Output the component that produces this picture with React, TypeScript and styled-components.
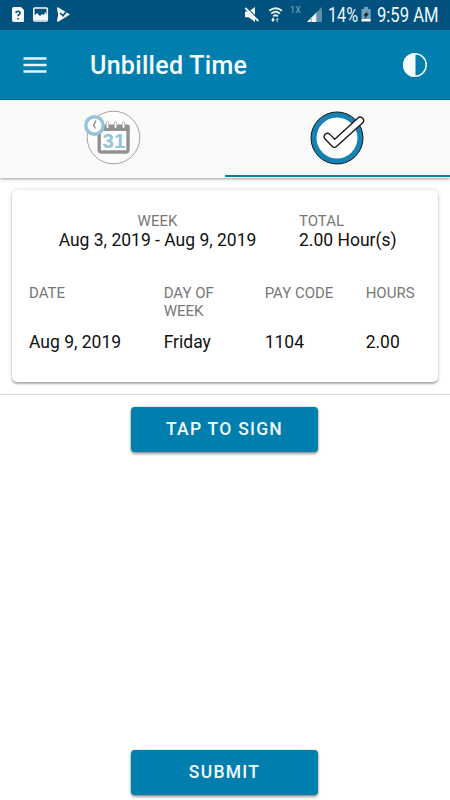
import React from "react";
import styled, { createGlobalStyle } from "styled-components";

const BLUE = "#007faf";

const GlobalStyle = createGlobalStyle`
  * { box-sizing: border-box; }
  body { margin: 0; background: #fff; font-family: Roboto, "Liberation Sans", sans-serif; color: #111; }
`;

const Screen = styled.div`
  width: 450px;
  height: 800px;
  display: flex;
  flex-direction: column;
  overflow: hidden;
  background: #fff;
`;

const StatusBar = styled.div`
  height: 30px;
  flex: none;
  display: flex;
  justify-content: space-between;
  background: #00517e;
  color: #f3f9fc;
`;

const Icon = styled.svg`
  display: block;
  flex: none;
`;

const StatusGroup = styled.div`
  display: flex;
`;

const StatusText = styled.span<{ $width: number; $scale: number }>`
  width: ${(p) => p.$width}px;
  font-size: 20px;
  line-height: 31px;
  white-space: nowrap;
  transform: scaleX(${(p) => p.$scale});
  transform-origin: left;
`;

const NetworkText = styled.span`
  width: 16px;
  padding-left: 1px;
  font-size: 9px;
  line-height: 21px;
  letter-spacing: 0.2px;
  color: #84adc4;
`;

const Header = styled.header`
  height: 70px;
  flex: none;
  display: flex;
  align-items: center;
  padding: 0 23px 0 23px;
  background: ${BLUE};
  border-bottom: 1px solid #0076a6;
`;

const Title = styled.h1`
  flex: 1;
  margin: 2px 0 0 43px;
  font-size: 25px;
  line-height: 30px;
  font-weight: 500;
  letter-spacing: 0.3px;
  color: #f7fcff;
`;

const Tabs = styled.nav`
  height: 78px;
  flex: none;
  display: grid;
  grid-template-columns: 1fr 1fr;
  background: #fafafa;
  box-shadow: 0 1px 3px rgba(0, 0, 0, 0.4);
`;

const Tab = styled.div<{ $active?: boolean }>`
  height: 77px;
  display: flex;
  justify-content: center;
  padding-right: 1px;
  border-bottom: 2px solid ${(p) => (p.$active ? BLUE : "transparent")};
`;

const Card = styled.section`
  margin: 12px 12px 0;
  height: 192px;
  flex: none;
  padding: 22px 10px 0 12px;
  border-radius: 5px;
  background: #fff;
  box-shadow: 0 2px 2px rgba(0, 0, 0, 0.28), 0 0 4px rgba(0, 0, 0, 0.16);
`;

const Summary = styled.div`
  display: grid;
  grid-template-columns: 269px 1fr;
  height: 72px;
`;

const SummaryItem = styled.div<{ $center?: boolean }>`
  padding: ${(p) => (p.$center ? "0 7px 0 5px" : "0 0 0 6px")};
  text-align: ${(p) => (p.$center ? "center" : "left")};
`;

const Row = styled.div<{ $height: number }>`
  display: grid;
  grid-template-columns: 4fr 3fr 3fr 2fr;
  height: ${(p) => p.$height}px;
`;

const Label = styled.div`
  font-size: 15px;
  line-height: 18px;
  color: #777;
  white-space: nowrap;
`;

const Value = styled.div`
  font-size: 17.5px;
  line-height: 20px;
  color: #111;
  white-space: nowrap;
`;

const Cell = styled.div`
  padding-left: 5px;
`;

const Actions = styled.main`
  margin-top: 12px;
  padding: 12px 1px 5px 0;
  flex: 1;
  display: flex;
  flex-direction: column;
  align-items: center;
  justify-content: space-between;
  border-top: 1px solid #d4d4d4;
`;

const Button = styled.button`
  width: 187px;
  height: 45px;
  padding: 0 0 1px;
  border: 0;
  border-radius: 4px;
  background: ${BLUE};
  color: #f3fbff;
  font: 500 17.5px/20px Roboto, "Liberation Sans", sans-serif;
  letter-spacing: 1.25px;
  box-shadow: 0 2px 3px rgba(0, 0, 0, 0.38), 0 0 2px rgba(0, 0, 0, 0.3);
`;

const NotificationIcons = () => (
  <Icon width="80" height="30">
    <path d="M14 7h7l3 3v11q0 1-1 1h-9q-2 0-2-2V9q0-2 2-2z" fill="#f7fbff" />
    <path d="M16 13.1q0-1.9 2-1.9t2 1.7q0 1-1 1.7t-1 1.7M18 18v1.6" fill="none" stroke="#00517e" strokeWidth="1.6" />
    <rect x="33.8" y="8" width="13.5" height="13" rx="1" fill="none" stroke="#f7fbff" strokeWidth="1.6" />
    <path d="M34 20v-4l3-3 3 3 2-2 2 1 1-3 2 3v5z" fill="#f7fbff" />
    <path d="M57 8.2q0-1.5 1.4-.8L70 14.6 58.5 21.6q-1.5.8-1.5-.8l1.2-6z" fill="#f7fbff" />
    <path d="M60.2 13l2.8 2.8 4.7-6" fill="none" stroke="#00517e" strokeWidth="1.7" />
  </Icon>
);

const MuteWifiIcons = () => (
  <Icon width="45" height="30">
    <path d="M1 11.5h3.6L11 7v15l-6.4-4.8H1z" fill="#f7fbff" />
    <path d="M2.2 7.2l13 13" stroke="#00517e" strokeWidth="1.5" />
    <path d="M1.3 8l13 13" stroke="#f7fbff" strokeWidth="1.8" />
    <g fill="none" stroke="#e7f2f8" strokeWidth="1.8">
      <path d="M25.2 10.8q6.4-5 12.8 0" />
      <path d="M27.2 13.6q4.4-3.6 8.8 0" />
      <path d="M29.3 16.2q2.3-1.8 4.6 0" />
    </g>
    <path d="M28.2 17.8h1.5v1.7h1.3L29 22l-2-2.5h1.2z" fill="#f7fbff" />
    <path d="M32.5 22v-2h-1.2l2-2.5 2 2.5H34v2z" fill="#8aafc5" />
  </Icon>
);

const SignalIcon = () => (
  <Icon width="23" height="30">
    <path d="M17 7v15H2z" fill="#608fac" />
    <path d="M2 22l3.7-3.7V22zM6.5 22v-4.5L11 13v9z" fill="#f7fbff" />
    <path d="M6 17v5M11.4 12.5V22" stroke="#a4c0d0" strokeWidth=".7" />
  </Icon>
);

const BatteryIcon = () => (
  <Icon width="18" height="30">
    <path d="M2.5 9H5V7h4v2h2.7v10H2.5z" fill="#729eb8" />
    <path d="M2.5 19h9.2v2.5H2.5z" fill="#f7fbff" />
    <path d="M8.7 10.7l-4.3 4.7h2.2l-1.2 4.1 4.5-6H7.4z" fill="#10191d" />
  </Icon>
);

const MenuIcon = () => (
  <Icon width="24" height="18">
    <path d="M.5 2.5h23M.5 9h23M.5 15.5h23" stroke="#e7f3fa" strokeWidth="2.5" />
  </Icon>
);

const ContrastIcon = () => (
  <Icon width="26" height="26">
    <circle cx="14" cy="13" r="11.2" fill="none" stroke="#f5fbff" strokeWidth="1.5" />
    <path d="M14.5 1v24H14a12 12 0 0 1 0-24z" fill="#f7fcff" />
  </Icon>
);

const CalendarIcon = () => (
  <Icon width="60" height="75">
    <circle cx="31.5" cy="37.5" r="26.3" fill="#fcfcfc" stroke="#8b8b8b" strokeWidth=".8" />
    <rect x="17.2" y="26.2" width="28.8" height="25.8" rx="2" fill="#fff" stroke="#919191" strokeWidth="3.4" />
    <path d="M15.5 25h32v6h-32z" fill="#919191" />
    <path d="M25.5 23v4M33.5 23v4M41.5 23v4" stroke="#999" strokeWidth="3.2" strokeLinecap="round" />
    <path d="M25.5 23v4M33.5 23v4M41.5 23v4" stroke="#fafafa" strokeWidth="2" strokeLinecap="round" />
    <text x="32" y="48" textAnchor="middle" fontFamily="Liberation Sans, sans-serif" fontSize="20.5" fontWeight="700" fill="#94c3da">31</text>
    <circle cx="12.5" cy="25.5" r="8.7" fill="#fff" stroke="#94c3da" strokeWidth="3.5" />
    <path d="M14 20.5l-2.4 5 2 3" fill="none" stroke="#777" strokeWidth="1.1" />
  </Icon>
);

const CheckIcon = () => (
  <Icon width="60" height="75">
    <circle cx="30" cy="38" r="26" fill="#1682b4" stroke="#171717" strokeWidth="1" />
    <circle cx="30" cy="38" r="20.5" fill="#fff" />
    <path d="M20.5 36.7l7 7.2L53.2 20.5" fill="none" stroke="#171717" strokeWidth="8" strokeLinecap="round" strokeLinejoin="round" />
    <path d="M20.5 36.7l7 7.2L53.2 20.5" fill="none" stroke="#fff" strokeWidth="5.3" strokeLinecap="round" strokeLinejoin="round" />
  </Icon>
);

export default function App() {
  return (
    <>
      <GlobalStyle />
      <Screen>
        <StatusBar>
          <NotificationIcons />
          <StatusGroup>
            <MuteWifiIcons />
            <NetworkText>1X</NetworkText>
            <SignalIcon />
            <StatusText $width={31} $scale={0.81}>14%</StatusText>
            <BatteryIcon />
            <StatusText $width={73} $scale={0.83}>9:59 AM</StatusText>
          </StatusGroup>
        </StatusBar>
        <Header>
          <MenuIcon />
          <Title>Unbilled Time</Title>
          <ContrastIcon />
        </Header>
        <Tabs>
          <Tab><CalendarIcon /></Tab>
          <Tab $active><CheckIcon /></Tab>
        </Tabs>
        <Card>
          <Summary>
            <SummaryItem $center>
              <Label>WEEK</Label>
              <Value>Aug 3, 2019 - Aug 9, 2019</Value>
            </SummaryItem>
            <SummaryItem>
              <Label>TOTAL</Label>
              <Value>2.00 Hour(s)</Value>
            </SummaryItem>
          </Summary>
          <Row $height={48}>
            <Cell><Label>DATE</Label></Cell>
            <Cell><Label>DAY OF<br />WEEK</Label></Cell>
            <Cell><Label>PAY CODE</Label></Cell>
            <Cell><Label>HOURS</Label></Cell>
          </Row>
          <Row $height={20}>
            <Cell><Value>Aug 9, 2019</Value></Cell>
            <Cell><Value>Friday</Value></Cell>
            <Cell><Value>1104</Value></Cell>
            <Cell><Value>2.00</Value></Cell>
          </Row>
        </Card>
        <Actions>
          <Button>TAP TO SIGN</Button>
          <Button>SUBMIT</Button>
        </Actions>
      </Screen>
    </>
  );
}
